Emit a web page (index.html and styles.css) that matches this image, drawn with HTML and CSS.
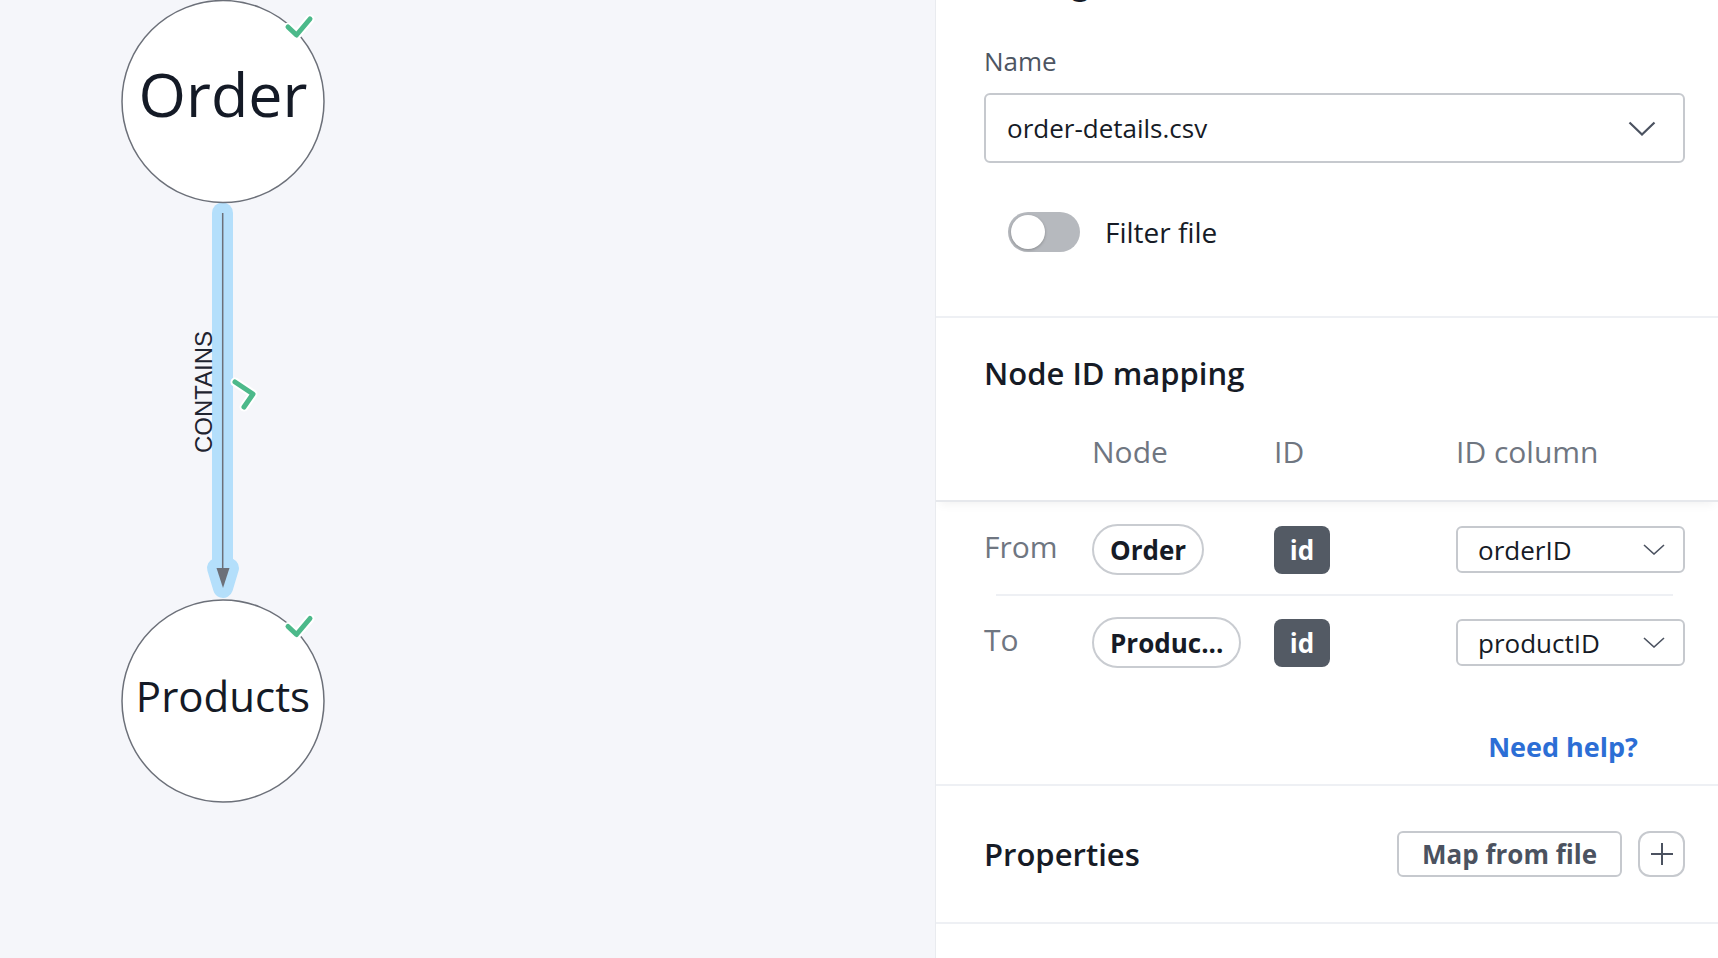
FILE: index.html
```html
<!DOCTYPE html>
<html lang="en">
<head>
<meta charset="utf-8">
<title>Relationship mapping</title>
<link rel="stylesheet" href="styles.css">
</head>
<body>
<div class="app">
  <div class="canvas">
    <svg class="graph" width="935" height="958" viewBox="0 0 935 958">
      <line x1="222.5" y1="213" x2="222.5" y2="562" stroke="#b4dffb" stroke-width="21" stroke-linecap="round"/>
      <polygon points="217,568 229,568 223,588" fill="#b4dffb" stroke="#b4dffb" stroke-width="20" stroke-linejoin="round"/>
      <line x1="222.7" y1="213" x2="222.7" y2="572" stroke="#6c7079" stroke-width="1.5"/>
      <polygon points="216.5,568 229.5,568 223,588" fill="#6c7079"/>
      <text class="edge-label" transform="translate(212,392) rotate(-90)" text-anchor="middle">CONTAINS</text>
      <polyline points="235,382 253,394 244,407" fill="none" stroke="#fff" stroke-width="9" stroke-linecap="round" stroke-linejoin="round"/>
      <polyline points="235,382 253,394 244,407" fill="none" stroke="#4cb98a" stroke-width="5" stroke-linecap="round" stroke-linejoin="round"/>

      <circle cx="223" cy="101.5" r="101" fill="#fff" stroke="#6c7079" stroke-width="1.5"/>
      <text class="node-label order" x="223" y="117" text-anchor="middle">Order</text>
      <polyline points="288,27 296.5,35 310,19" fill="none" stroke="#fff" stroke-width="9" stroke-linecap="round" stroke-linejoin="round"/>
      <polyline points="288,27 296.5,35 310,19" fill="none" stroke="#4cb98a" stroke-width="5" stroke-linecap="round" stroke-linejoin="round"/>

      <circle cx="223" cy="701" r="101" fill="#fff" stroke="#6c7079" stroke-width="1.5"/>
      <text class="node-label products" x="223" y="712" text-anchor="middle">Products</text>
      <polyline points="288,626.5 296.5,634.5 310,618.5" fill="none" stroke="#fff" stroke-width="9" stroke-linecap="round" stroke-linejoin="round"/>
      <polyline points="288,626.5 296.5,634.5 310,618.5" fill="none" stroke="#4cb98a" stroke-width="5" stroke-linecap="round" stroke-linejoin="round"/>
    </svg>
  </div>

  <aside class="panel">
    <section class="file-sec">
      <h2 class="cut-heading">Settings</h2>
      <label class="field-label">Name</label>
      <div class="select-lg">
        <span>order-details.csv</span>
        <svg width="28" height="15" viewBox="0 0 28 15"><polyline points="1.5,1.5 14,13.5 26.5,1.5" fill="none" stroke="#4b5260" stroke-width="2.2"/></svg>
      </div>
      <div class="toggle-row">
        <span class="toggle"><span class="knob"></span></span>
        <span>Filter file</span>
      </div>
    </section>

    <section class="idmap">
      <div class="idmap-head">
        <h3 class="sec-title">Node ID mapping</h3>
        <div class="grid cols">
          <span></span><span>Node</span><span>ID</span><span>ID column</span>
        </div>
      </div>
      <div class="rows">
        <div class="grid row">
          <span class="row-label">From</span>
          <span class="pill">Order</span>
          <span class="badge">id</span>
          <div class="select-sm">
            <span>orderID</span>
            <svg width="22" height="11" viewBox="0 0 22 11"><polyline points="1,1 11,10 21,1" fill="none" stroke="#4b5260" stroke-width="1.6"/></svg>
          </div>
        </div>
        <div class="row-sep"></div>
        <div class="grid row">
          <span class="row-label">To</span>
          <span class="pill">Produc...</span>
          <span class="badge">id</span>
          <div class="select-sm">
            <span>productID</span>
            <svg width="22" height="11" viewBox="0 0 22 11"><polyline points="1,1 11,10 21,1" fill="none" stroke="#4b5260" stroke-width="1.6"/></svg>
          </div>
        </div>
      </div>
      <div class="help"><a class="help-link">Need help?</a></div>
    </section>

    <section class="props">
      <h3 class="sec-title">Properties</h3>
      <div class="actions">
        <button class="btn">Map from file</button>
        <button class="btn plus"><svg width="22" height="22" viewBox="0 0 22 22"><path d="M11 0V22M0 11H22" stroke="#4b5260" stroke-width="2"/></svg></button>
      </div>
    </section>
  </aside>
</div>
</body>
</html>
```

FILE: styles.css
```css
* { box-sizing: border-box; }

html, body {
  margin: 0;
  padding: 0;
}

body {
  font-family: "Open Sans", "Liberation Sans", sans-serif;
  color: #161b26;
  overflow: hidden;
  background: #fff;
}

.app {
  display: flex;
  width: 1718px;
  height: 958px;
}

.canvas {
  width: 935px;
  flex: none;
  background: #f5f6fa;
}

.graph { display: block; }

.edge-label {
  font-family: "Liberation Sans", Arial, sans-serif;
  font-size: 24px;
  fill: #1f2430;
}

.node-label {
  font-family: "Open Sans", "Liberation Sans", sans-serif;
  fill: #141a26;
}
.node-label.order { font-size: 61px; }
.node-label.products { font-size: 42px; }

.panel {
  flex: 1;
  background: #fff;
  border-left: 1px solid #e9ebef;
  overflow: hidden;
}

/* file section */
.file-sec {
  padding: 0 33px 64px 48px;
  border-bottom: 2px solid #eef0f4;
}

.cut-heading {
  margin: -37px 0 0;
  height: 40px;
  font-size: 31px;
  line-height: 40px;
  font-weight: 600;
}

.field-label {
  display: block;
  margin-top: 40px;
  font-size: 26px;
  line-height: 36px;
  color: #4d5562;
}

.select-lg {
  margin-top: 14px;
  height: 70px;
  border: 2px solid #c6c9ce;
  border-radius: 6px;
  display: flex;
  align-items: center;
  justify-content: space-between;
  padding: 0 27px 0 21px;
  font-size: 26px;
  line-height: 36px;
}
.select-lg svg { display: block; }

.toggle-row {
  margin-top: 49px;
  display: flex;
  align-items: center;
  gap: 25px;
  padding-left: 24px;
  font-size: 28px;
  line-height: 40px;
}

.toggle {
  width: 72px;
  height: 40px;
  border-radius: 20px;
  background: #b6b9be;
  display: flex;
  align-items: center;
  padding: 0 3px;
}
.knob {
  width: 34px;
  height: 34px;
  border-radius: 50%;
  background: #fff;
  box-shadow: 0 1px 3px rgba(0,0,0,0.25);
}

/* id mapping */
.idmap {
  border-bottom: 2px solid #eef0f4;
}

.idmap-head {
  padding: 33px 33px 28px 48px;
  border-bottom: 2px solid #e6e8ec;
  box-shadow: 0 6px 10px -4px rgba(0,0,0,0.06);
}

.sec-title {
  margin: 0;
  font-size: 31px;
  line-height: 44px;
  font-weight: 600;
  color: #161b26;
}

.grid {
  display: grid;
  grid-template-columns: 108px 182px 182px 1fr;
  align-items: center;
}

.cols {
  margin-top: 37px;
  height: 40px;
  font-size: 30px;
  line-height: 40px;
  color: #6f7681;
}

.rows {
  padding: 22px 33px 0 48px;
}

.row { height: 51px; }

.row-label {
  font-size: 30px;
  line-height: 40px;
  color: #6f7681;
  padding-bottom: 5px;
}

.pill {
  justify-self: start;
  display: inline-flex;
  align-items: center;
  height: 51px;
  padding: 0 16px;
  border: 2px solid #c9ccd1;
  border-radius: 26px;
  font-size: 26px;
  font-weight: 700;
  color: #161b26;
  white-space: nowrap;
}

.badge {
  justify-self: start;
  width: 56px;
  height: 48px;
  border-radius: 8px;
  background: #535a64;
  color: #fff;
  font-size: 26px;
  font-weight: 700;
  display: flex;
  align-items: center;
  justify-content: center;
}

.select-sm {
  height: 47px;
  border: 2px solid #c6c9ce;
  border-radius: 6px;
  display: flex;
  align-items: center;
  justify-content: space-between;
  padding: 0 18px 0 20px;
  font-size: 26px;
  line-height: 36px;
}
.select-sm svg { display: block; }

.row-sep {
  height: 2px;
  background: #eef0f4;
  margin: 19px 12px 21px;
}

.help {
  margin-top: 61px;
  padding: 0 80px 19px 0;
  text-align: right;
  font-size: 27px;
  font-weight: 700;
  line-height: 36px;
}

.help-link {
  color: #2c6ed5;
  cursor: pointer;
}

/* properties */
.props {
  padding: 45px 33px 45px 48px;
  display: flex;
  align-items: center;
  justify-content: space-between;
  border-bottom: 2px solid #eef0f4;
}

.actions {
  display: flex;
  gap: 16px;
}

.btn {
  height: 46px;
  padding: 0 23px;
  border: 2px solid #c6c9ce;
  border-radius: 6px;
  background: #fff;
  font-family: "Open Sans", "Liberation Sans", sans-serif;
  font-size: 26px;
  font-weight: 700;
  color: #4b5260;
  display: flex;
  align-items: center;
}

.btn.plus {
  width: 47px;
  padding: 0;
  border-radius: 12px;
  justify-content: center;
}
.btn.plus svg { display: block; }
```
